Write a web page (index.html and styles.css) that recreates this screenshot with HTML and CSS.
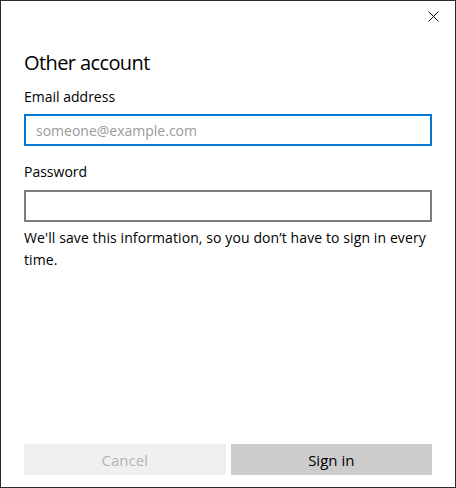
FILE: index.html
```html
<!DOCTYPE html>
<html lang="en">
<head>
<meta charset="utf-8">
<title>Other account</title>
<link rel="stylesheet" href="styles.css">
</head>
<body>
<div class="window">
  <div class="titlebar">
    <button class="close" aria-label="Close">
      <svg width="11" height="11" viewBox="0 0 11 11"><path d="M0.5 0.5 L10.5 10.5 M10.5 0.5 L0.5 10.5" stroke="#000" stroke-width="1" fill="none"/></svg>
    </button>
  </div>
  <div class="content">
    <h1 class="title">Other account</h1>
    <label class="label" for="email">Email address</label>
    <input class="field field-focus" id="email" type="text" placeholder="someone@example.com">
    <label class="label label-pw" for="pw">Password</label>
    <input class="field" id="pw" type="password">
    <p class="note">We'll save this information, so you don’t have to sign in every time.</p>
  </div>
  <div class="footer">
    <button class="btn btn-cancel">Cancel</button>
    <button class="btn btn-primary">Sign in</button>
  </div>
</div>
</body>
</html>
```
FILE: styles.css
```css
html, body {
  margin: 0;
  padding: 0;
  background: #ffffff;
}
.window {
  box-sizing: border-box;
  width: 456px;
  height: 488px;
  border: 1px solid #2b2b2b;
  background: #ffffff;
  display: flex;
  flex-direction: column;
  font-family: "Open Sans", "Noto Sans", sans-serif;
  color: #000000;
}
.titlebar {
  height: 31px;
  display: flex;
  justify-content: flex-end;
}
.close {
  width: 44px;
  height: 31px;
  border: 0;
  padding: 0;
  margin: 0;
  background: transparent;
  display: flex;
  align-items: center;
  justify-content: center;
}
.close svg {
  display: block;
}
.content {
  flex: 1;
  padding: 0 23px;
  display: flex;
  flex-direction: column;
}
.title {
  margin: 17px 0 0 0;
  font-size: 20px;
  line-height: 28px;
  font-weight: 400;
  letter-spacing: -0.6px;
}
.label {
  display: block;
  margin-top: 10px;
  font-size: 14px;
  line-height: 20px;
}
.label-pw {
  margin-top: 16px;
}
.field {
  box-sizing: border-box;
  width: 408px;
  height: 32px;
  margin: 7px 0 0 0;
  border: 2px solid #7a7a7a;
  padding: 0 10px;
  font-family: "Open Sans", "Noto Sans", sans-serif;
  font-size: 14px;
  outline: none;
  background: #fff;
}
#pw {
  margin-top: 8px;
}
.field-focus {
  border-color: #0078d7;
}
.field::placeholder {
  color: #9a9a9a;
}
.note {
  margin: 5px 0 0 0;
  font-size: 14px;
  line-height: 22px;
  letter-spacing: 0.1px;
}
.footer {
  display: flex;
  gap: 5px;
  padding: 0 23px 12px 23px;
}
.btn {
  flex: 1;
  height: 31px;
  border: 0;
  margin: 0;
  padding: 0;
  font-family: "Open Sans", "Noto Sans", sans-serif;
  font-size: 15px;
}
.btn-cancel {
  background: #f0f0f0;
  color: #b4b4b4;
}
.btn-primary {
  background: #cccccc;
  color: #000000;
}
```
